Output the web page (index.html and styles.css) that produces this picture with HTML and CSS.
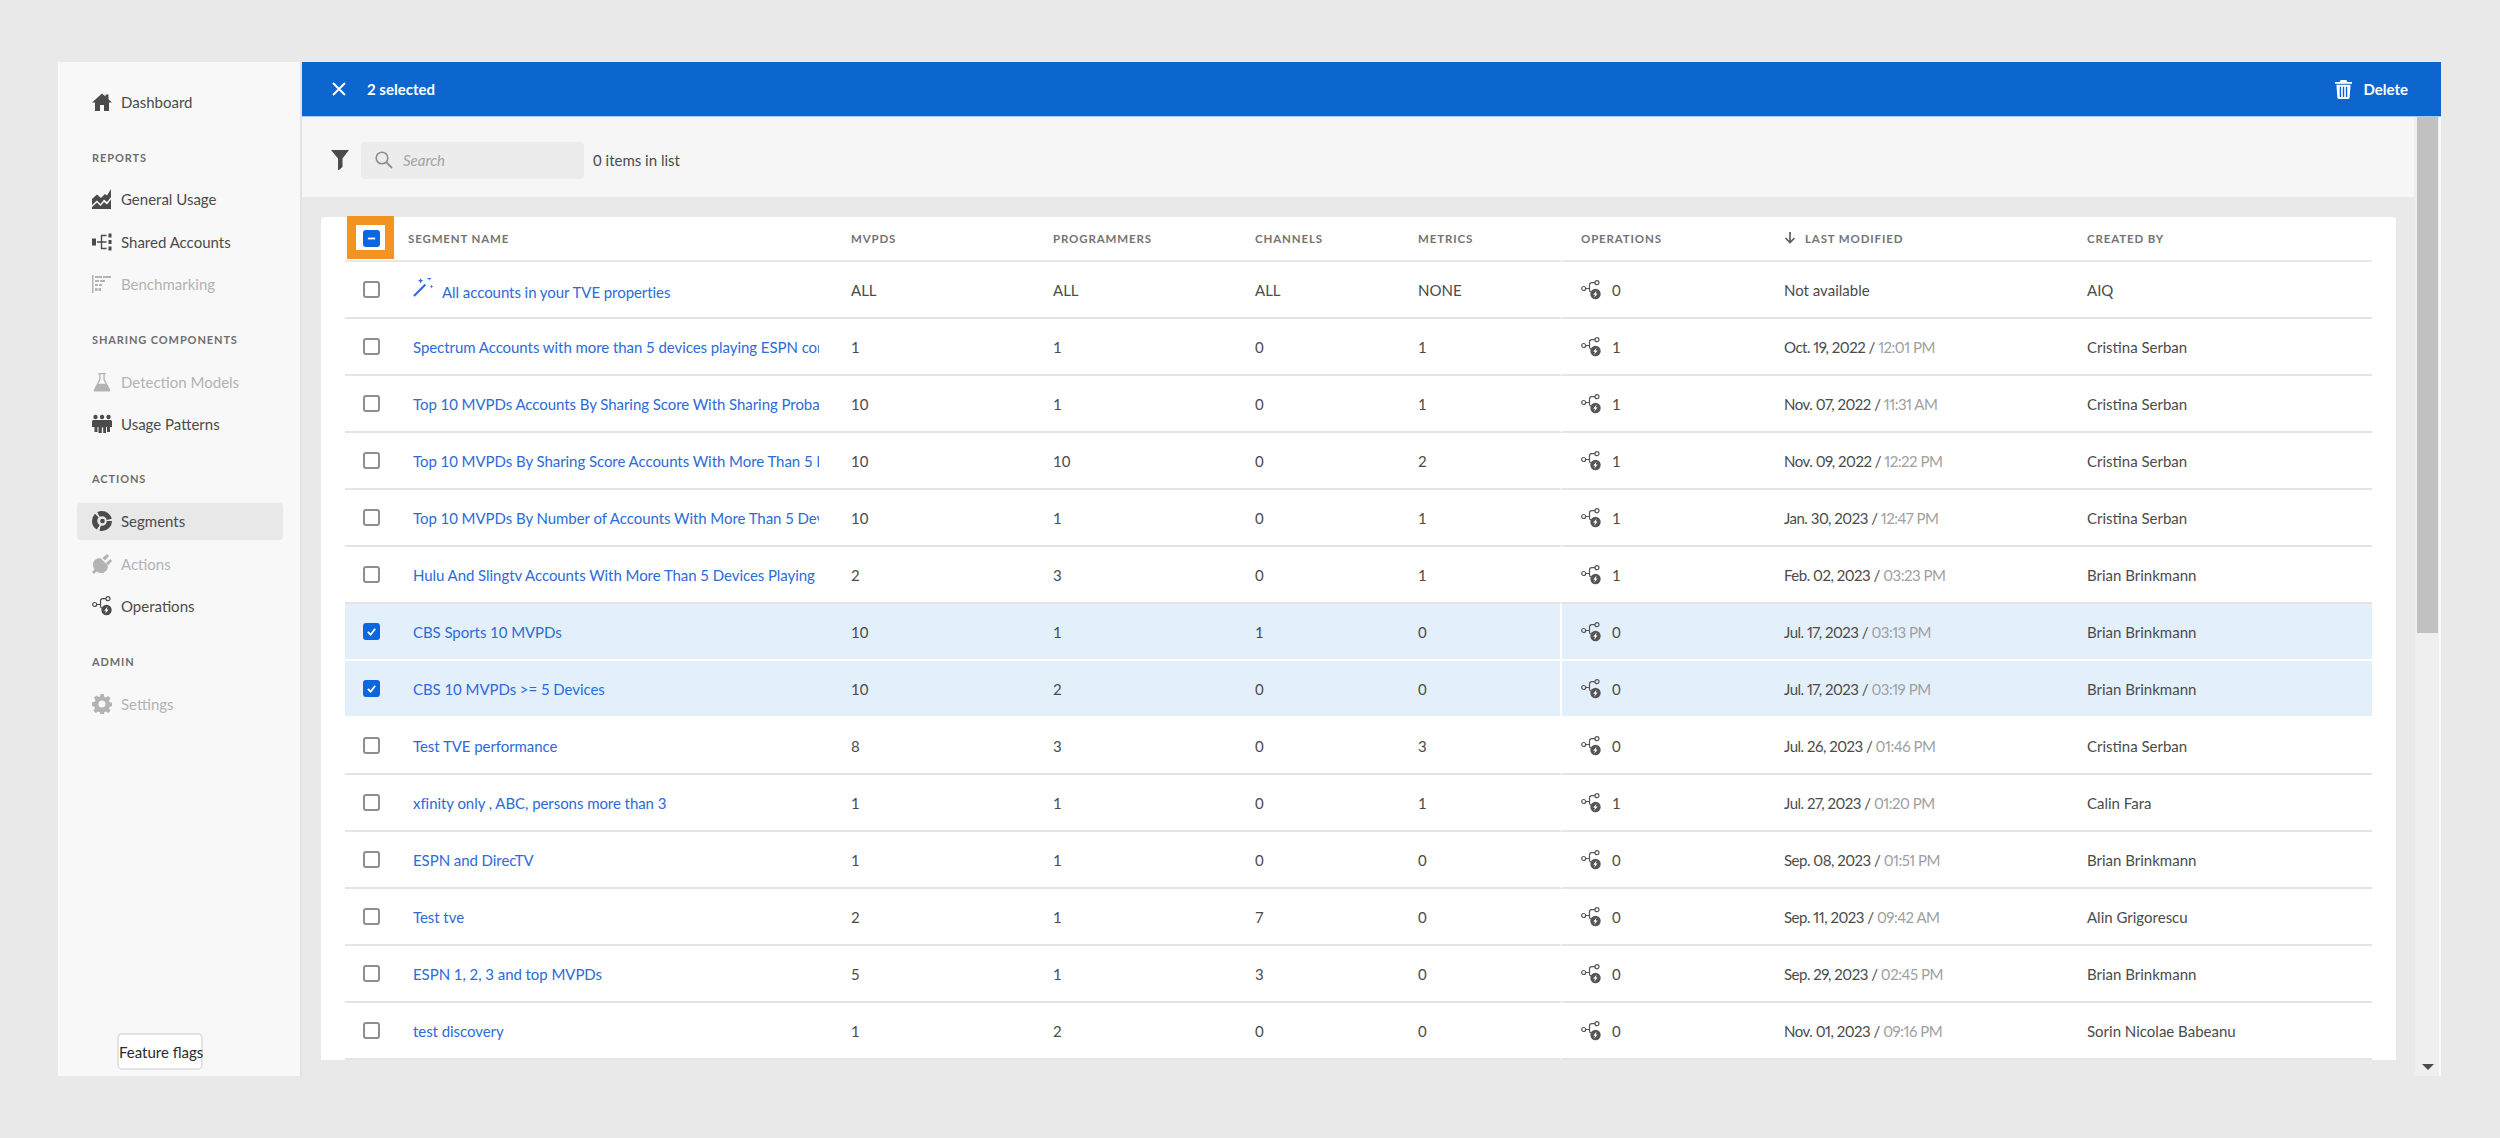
FILE: index.html
```html
<!DOCTYPE html>
<html lang="en">
<head>
    <meta charset="UTF-8">
    <title>Segments</title>
    <link rel="stylesheet" href="styles.css">
</head>
<body>
    <svg class="sprite" xmlns="http://www.w3.org/2000/svg">
        <symbol id="i-home" viewBox="0 0 20 20"><path d="M10 1.500 0 10.500h3V19h5v-6h4v6h5v-8.500h3l-3.500-3.200V2.500h-3v2z"/></symbol>
        <symbol id="i-usage" viewBox="0 0 20 20"><path d="M0 10 5 5.500 9 9l4-4 2 1.500L19 0v8l-4 5-3-2.500L8.500 15 5 11.500 0 16zM0 18l5-4.500 3.500 3.500 3.500-4 3 2.500 4-5V20H0z"/></symbol>
        <symbol id="i-shared" viewBox="0 0 20 20"><path d="M0 6.500h4v7H0zM16.500 1.500h3v4h-3zM16.500 8h3v4h-3zM16.500 14.500h3v4h-3z"/><path d="M5 10h4M14.500 3.500H9.500v13h5M9.500 10h5" fill="none" stroke="currentColor" stroke-width="1.400"/></symbol>
        <symbol id="i-bench" viewBox="0 0 20 20"><path d="M0 1h1.500v18H0zM3 2h7v2H3zM11 2h8v2h-8zM3 6h4v2H3zM8 6h5v2H8zM3 10h3v2H3zM7 10h3v2H7zM3 14h2.500v3H3zM6.500 14H9v3H6.500z"/></symbol>
        <symbol id="i-flask" viewBox="0 0 20 22"><path d="M6 1h8v1.500h-1V8l6 11.500c.5 1-.2 2-1.300 2H2.300C1.200 21.500.500 20.500 1 19.500L7 8V2.500H6zM8.500 2.500V8.500L6 13h8l-2.500-4.500v-6z" fill-rule="evenodd"/></symbol>
        <symbol id="i-group" viewBox="0 0 20 20"><circle cx="3.500" cy="3" r="2.200"/><circle cx="10" cy="3" r="2.200"/><circle cx="16.500" cy="3" r="2.200"/><path d="M0 7.500c0-1 .8-1.500 1.500-1.500h17c.7 0 1.500.5 1.500 1.500V13h-2v5h-3v-5h-1v6h-2.800v-5.500h-1.400V19H6.500v-6h-1v5h-3v-5H0z"/></symbol>
        <symbol id="i-segments" viewBox="0 0 20 20"><circle cx="10" cy="10" r="7.400" fill="none" stroke="currentColor" stroke-width="5.200" stroke-dasharray="13.500 2"/><circle cx="10.500" cy="10" r="2.300"/></symbol>
        <symbol id="i-plug" viewBox="0 0 20 20"><path d="M9 4.500 15.500 11c1 3-.5 6-3.500 7.500-2.500 1-5.500.5-7.500-1L2 20 0 18l2.500-2.500C1 13.500.5 10.500 1.500 8 3 5 6 3.500 9 4.500z"/><path d="M10.500 4 15 0l2 2-4 4.500zM14 9l4.500-4 1.500 2-4 4.500z"/></symbol>
        <symbol id="i-ops" viewBox="0 0 20 20"><g fill="none" stroke="currentColor" stroke-width="1.200"><circle cx="2.700" cy="8.500" r="2"/><circle cx="16" cy="2.700" r="2"/><path d="M4.700 8.500h3.800M8.500 8.500V5a2.300 2.300 0 0 1 2.300-2.300H14M8.500 8.500v1.500a2 2 0 0 0 1.500 2"/></g><circle cx="14.500" cy="14" r="5.200"/><path d="M15.600 10.500 12.200 14.800h1.800l-.8 2.900 3.400-4.300h-1.800z" fill="#fff"/></symbol>
        <symbol id="i-gear" viewBox="0 0 20 20"><path d="M8.300 0h3.400l.5 2.800 1.700.7L16.200 1.900l2.400 2.400-1.600 2.300.7 1.700 2.800.5v3.400l-2.800.5-.7 1.700 1.600 2.300-2.400 2.400-2.300-1.600-1.700.7-.5 2.800H8.300l-.5-2.800-1.700-.7-2.300 1.600-2.400-2.400 1.600-2.300-.7-1.700L0 11.700V8.300l2.800-.5.7-1.700-1.600-2.300 2.400-2.400 2.300 1.600 1.700-.7zM10 6.500a3.500 3.500 0 1 0 0 7 3.500 3.500 0 0 0 0-7z" fill-rule="evenodd"/></symbol>
        <symbol id="i-wand" viewBox="0 0 22 22"><path d="M1 21 13 9" fill="none" stroke="currentColor" stroke-width="2.200"/><path d="M8 2l.8 2.200L11 5l-2.200.8L8 8l-.8-2.200L5 5l2.200-.8zM17 0l.7 1.800 1.800.7-1.800.7L17 5l-.7-1.800-1.800-.7 1.800-.7zM19.500 9l.5 1.500 1.500.5-1.500.5-.5 1.500-.5-1.500-1.500-.5 1.500-.5z"/></symbol>
    </svg>

    <div class="app">
        <nav class="sidebar">
            <a class="nav-item"><svg class="nav-icon"><use href="#i-home"/></svg>Dashboard</a>

            <div class="nav-head">Reports</div>
            <a class="nav-item"><svg class="nav-icon"><use href="#i-usage"/></svg>General Usage</a>
            <a class="nav-item"><svg class="nav-icon"><use href="#i-shared"/></svg>Shared Accounts</a>
            <a class="nav-item off"><svg class="nav-icon"><use href="#i-bench"/></svg>Benchmarking</a>

            <div class="nav-head">Sharing Components</div>
            <a class="nav-item off"><svg class="nav-icon"><use href="#i-flask"/></svg>Detection Models</a>
            <a class="nav-item"><svg class="nav-icon"><use href="#i-group"/></svg>Usage Patterns</a>

            <div class="nav-head">Actions</div>
            <a class="nav-item active"><svg class="nav-icon"><use href="#i-segments"/></svg>Segments</a>
            <a class="nav-item off"><svg class="nav-icon"><use href="#i-plug"/></svg>Actions</a>
            <a class="nav-item"><svg class="nav-icon"><use href="#i-ops"/></svg>Operations</a>

            <div class="nav-head">Admin</div>
            <a class="nav-item off"><svg class="nav-icon"><use href="#i-gear"/></svg>Settings</a>

            <button class="flags">Feature flags</button>
        </nav>

        <main class="main">
            <div class="select-bar">
                <div class="select-left">
                    <svg class="close" viewBox="0 0 14 14"><path d="M1 1l12 12M13 1 1 13" stroke="#fff" stroke-width="2" fill="none"/></svg>
                    <span>2 selected</span>
                </div>
                <div class="select-right">
                    <svg class="trash" viewBox="0 0 18 20"><path d="M6 0h6l1 2h5v2H0V2h5zM1.500 5h15l-1 13.500c0 .8-.7 1.500-1.500 1.500H4c-.8 0-1.500-.7-1.500-1.500zM5 7v11h1.500V7zM8.250 7v11h1.500V7zM11.500 7v11H13V7z" fill="#fff" fill-rule="evenodd"/></svg>
                    <span>Delete</span>
                </div>
            </div>

            <div class="below">
                <div class="content">
                    <div class="toolbar">
                        <svg class="filter" viewBox="0 0 18 20"><path d="M0 0h18l-6.500 8.500V17L8 20H7V8.500z" fill="#4b4b4b"/></svg>
                        <div class="search">
                            <svg class="glass" viewBox="0 0 18 18"><circle cx="7" cy="7" r="5.800" fill="none" stroke="#8e8e8e" stroke-width="1.600"/><path d="M11.500 11.500 17 17" stroke="#8e8e8e" stroke-width="1.800"/></svg>
                            <span>Search</span>
                        </div>
                        <span class="count">0 items in list</span>
                    </div>

                    <div class="card">
                        <div class="marker"></div>
                        <table class="grid">
                            <colgroup>
                                <col class="c-check"><col class="c-name"><col class="c-mvpd"><col class="c-prog">
                                <col class="c-chan"><col class="c-metric"><col class="c-ops"><col class="c-date"><col class="c-user">
                            </colgroup>
                            <thead>
                                <tr>
                                    <th class="check"><span class="cb on"><svg viewBox="0 0 12 12"><path d="M2 6h8" stroke="#fff" stroke-width="2"/></svg></span></th>
                                    <th>Segment Name</th><th>MVPDs</th><th>Programmers</th><th>Channels</th><th class="metric">Metrics</th>
                                    <th class="ops">Operations</th>
                                    <th><svg class="sort" viewBox="0 0 12 12"><path d="M6 0v10M1.500 6 6 10.500 10.500 6" fill="none" stroke="#5e5e5e" stroke-width="1.700"/></svg>Last Modified</th>
                                    <th>Created By</th>
                                </tr>
                            </thead>
                            <tbody>
                                <tr>
                                    <td class="check"><span class="cb"></span></td>
                                    <td><div class="name first"><svg class="wand"><use href="#i-wand"/></svg><a>All accounts in your TVE properties</a></div></td>
                                    <td>ALL</td><td>ALL</td><td>ALL</td><td class="metric">NONE</td>
                                    <td class="ops"><svg class="op-icon"><use href="#i-ops"/></svg>0</td>
                                    <td>Not available</td><td>AIQ</td>
                                </tr>
                                <tr>
                                    <td class="check"><span class="cb"></span></td>
                                    <td><div class="name"><a>Spectrum Accounts with more than 5 devices playing ESPN content</a></div></td>
                                    <td>1</td><td>1</td><td>0</td><td class="metric">1</td>
                                    <td class="ops"><svg class="op-icon"><use href="#i-ops"/></svg>1</td>
                                    <td class="date">Oct. 19, 2022 / <span class="time">12:01 PM</span></td><td>Cristina Serban</td>
                                </tr>
                                <tr>
                                    <td class="check"><span class="cb"></span></td>
                                    <td><div class="name"><a>Top 10 MVPDs Accounts By Sharing Score With Sharing Probability</a></div></td>
                                    <td>10</td><td>1</td><td>0</td><td class="metric">1</td>
                                    <td class="ops"><svg class="op-icon"><use href="#i-ops"/></svg>1</td>
                                    <td class="date">Nov. 07, 2022 / <span class="time">11:31 AM</span></td><td>Cristina Serban</td>
                                </tr>
                                <tr>
                                    <td class="check"><span class="cb"></span></td>
                                    <td><div class="name"><a>Top 10 MVPDs By Sharing Score Accounts With More Than 5 Devices</a></div></td>
                                    <td>10</td><td>10</td><td>0</td><td class="metric">2</td>
                                    <td class="ops"><svg class="op-icon"><use href="#i-ops"/></svg>1</td>
                                    <td class="date">Nov. 09, 2022 / <span class="time">12:22 PM</span></td><td>Cristina Serban</td>
                                </tr>
                                <tr>
                                    <td class="check"><span class="cb"></span></td>
                                    <td><div class="name"><a>Top 10 MVPDs By Number of Accounts With More Than 5 Devices</a></div></td>
                                    <td>10</td><td>1</td><td>0</td><td class="metric">1</td>
                                    <td class="ops"><svg class="op-icon"><use href="#i-ops"/></svg>1</td>
                                    <td class="date">Jan. 30, 2023 / <span class="time">12:47 PM</span></td><td>Cristina Serban</td>
                                </tr>
                                <tr>
                                    <td class="check"><span class="cb"></span></td>
                                    <td><div class="name"><a>Hulu And Slingtv Accounts With More Than 5 Devices Playing</a></div></td>
                                    <td>2</td><td>3</td><td>0</td><td class="metric">1</td>
                                    <td class="ops"><svg class="op-icon"><use href="#i-ops"/></svg>1</td>
                                    <td class="date">Feb. 02, 2023 / <span class="time">03:23 PM</span></td><td>Brian Brinkmann</td>
                                </tr>
                                <tr class="picked">
                                    <td class="check"><span class="cb on"><svg viewBox="0 0 12 12"><path d="M2 6.500 5 9.500 10 3" fill="none" stroke="#fff" stroke-width="2"/></svg></span></td>
                                    <td><div class="name"><a>CBS Sports 10 MVPDs</a></div></td>
                                    <td>10</td><td>1</td><td>1</td><td class="metric">0</td>
                                    <td class="ops"><svg class="op-icon"><use href="#i-ops"/></svg>0</td>
                                    <td class="date">Jul. 17, 2023 / <span class="time">03:13 PM</span></td><td>Brian Brinkmann</td>
                                </tr>
                                <tr class="picked">
                                    <td class="check"><span class="cb on"><svg viewBox="0 0 12 12"><path d="M2 6.500 5 9.500 10 3" fill="none" stroke="#fff" stroke-width="2"/></svg></span></td>
                                    <td><div class="name"><a>CBS 10 MVPDs &gt;= 5 Devices</a></div></td>
                                    <td>10</td><td>2</td><td>0</td><td class="metric">0</td>
                                    <td class="ops"><svg class="op-icon"><use href="#i-ops"/></svg>0</td>
                                    <td class="date">Jul. 17, 2023 / <span class="time">03:19 PM</span></td><td>Brian Brinkmann</td>
                                </tr>
                                <tr>
                                    <td class="check"><span class="cb"></span></td>
                                    <td><div class="name"><a>Test TVE performance</a></div></td>
                                    <td>8</td><td>3</td><td>0</td><td class="metric">3</td>
                                    <td class="ops"><svg class="op-icon"><use href="#i-ops"/></svg>0</td>
                                    <td class="date">Jul. 26, 2023 / <span class="time">01:46 PM</span></td><td>Cristina Serban</td>
                                </tr>
                                <tr>
                                    <td class="check"><span class="cb"></span></td>
                                    <td><div class="name"><a>xfinity only , ABC, persons more than 3</a></div></td>
                                    <td>1</td><td>1</td><td>0</td><td class="metric">1</td>
                                    <td class="ops"><svg class="op-icon"><use href="#i-ops"/></svg>1</td>
                                    <td class="date">Jul. 27, 2023 / <span class="time">01:20 PM</span></td><td>Calin Fara</td>
                                </tr>
                                <tr>
                                    <td class="check"><span class="cb"></span></td>
                                    <td><div class="name"><a>ESPN and DirecTV</a></div></td>
                                    <td>1</td><td>1</td><td>0</td><td class="metric">0</td>
                                    <td class="ops"><svg class="op-icon"><use href="#i-ops"/></svg>0</td>
                                    <td class="date">Sep. 08, 2023 / <span class="time">01:51 PM</span></td><td>Brian Brinkmann</td>
                                </tr>
                                <tr>
                                    <td class="check"><span class="cb"></span></td>
                                    <td><div class="name"><a>Test tve</a></div></td>
                                    <td>2</td><td>1</td><td>7</td><td class="metric">0</td>
                                    <td class="ops"><svg class="op-icon"><use href="#i-ops"/></svg>0</td>
                                    <td class="date">Sep. 11, 2023 / <span class="time">09:42 AM</span></td><td>Alin Grigorescu</td>
                                </tr>
                                <tr>
                                    <td class="check"><span class="cb"></span></td>
                                    <td><div class="name"><a>ESPN 1, 2, 3 and top MVPDs</a></div></td>
                                    <td>5</td><td>1</td><td>3</td><td class="metric">0</td>
                                    <td class="ops"><svg class="op-icon"><use href="#i-ops"/></svg>0</td>
                                    <td class="date">Sep. 29, 2023 / <span class="time">02:45 PM</span></td><td>Brian Brinkmann</td>
                                </tr>
                                <tr>
                                    <td class="check"><span class="cb"></span></td>
                                    <td><div class="name"><a>test discovery</a></div></td>
                                    <td>1</td><td>2</td><td>0</td><td class="metric">0</td>
                                    <td class="ops"><svg class="op-icon"><use href="#i-ops"/></svg>0</td>
                                    <td class="date">Nov. 01, 2023 / <span class="time">09:16 PM</span></td><td>Sorin Nicolae Babeanu</td>
                                </tr>
                            </tbody>
                        </table>
                    </div>
                </div>

                <div class="scrollbar">
                    <div class="thumb"></div>
                    <div class="arrow"></div>
                </div>
            </div>
        </main>
    </div>
</body>
</html>
```

FILE: styles.css
```css
body {
    margin: 0;
    height: 1138px;
    overflow: hidden;
    background-color: #e9e9e9;
    font-family: Lato, "Open Sans", sans-serif;
    font-size: 15px;
    color: #4b4b4b;
}
.sprite {
    display: none;
}
.app {
    display: flex;
    width: 2383px;
    height: 1014px;
    margin: 62px 0 0 58px;
}

/* left nav */
.sidebar {
    display: flex;
    flex-direction: column;
    flex: none;
    box-sizing: border-box;
    width: 244px;
    padding: 19px 0 6px 1px;
    background-color: #f8f8f8;
    border-left: 1px solid #fbfbfb;
    border-right: 2px solid #e3e3e3;
}
.nav-item {
    display: flex;
    align-items: center;
    gap: 9px;
    box-sizing: border-box;
    width: 206px;
    height: 37px;
    margin: 2.75px 0 2.75px 17px;
    padding-left: 15px;
    border-radius: 4px;
    color: #4b4b4b;
}
.nav-item.off {
    color: #b3b3b3;
}
.nav-item.active {
    background-color: #e8e8e8;
}
.nav-icon {
    flex: none;
    width: 20px;
    height: 20px;
    fill: currentColor;
}
.nav-head {
    box-sizing: border-box;
    height: 54.7px;
    padding: 26px 0 0 32px;
    font-size: 11px;
    line-height: 16px;
    font-weight: 700;
    letter-spacing: 0.9px;
    text-transform: uppercase;
    color: #6e6e6e;
}
.flags {
    width: 86px;
    height: 37px;
    margin: auto 0 0 57px;
    padding: 0;
    background-color: #fff;
    border: 2px solid #e3e3e3;
    border-radius: 5px;
    font-family: Lato, sans-serif;
    font-size: 15px;
    color: #2c2c2c;
    white-space: nowrap;
}

/* blue selection bar */
.main {
    display: flex;
    flex-direction: column;
    flex: 1;
    min-width: 0;
}
.select-bar {
    display: flex;
    align-items: center;
    justify-content: space-between;
    flex: none;
    height: 55px;
    padding: 0 33px 0 30px;
    background-color: #0d66d0;
    border-bottom: 1px solid #a9c8ef;
    box-sizing: border-box;
    color: #fff;
    font-weight: 700;
    font-size: 15px;
}
.select-left, .select-right {
    display: flex;
    align-items: center;
}
.select-left {
    gap: 21px;
}
.select-right {
    gap: 11px;
}
.close {
    width: 14px;
    height: 14px;
}
.trash {
    width: 17px;
    height: 19px;
}

/* everything under the bar */
.below {
    display: flex;
    flex: 1;
    min-height: 0;
}
.content {
    flex: 1;
    min-width: 0;
    overflow: hidden;
}
.toolbar {
    display: flex;
    align-items: center;
    box-sizing: border-box;
    height: 80px;
    padding: 6px 0 0 29px;
    background-color: #f6f6f6;
    border-right: 1px solid #ececec;
}
.filter {
    width: 18px;
    height: 20px;
    margin-right: 12px;
}
.search {
    display: flex;
    align-items: center;
    gap: 10px;
    box-sizing: border-box;
    width: 223px;
    height: 37px;
    margin-right: 9px;
    padding-left: 14px;
    background-color: #ececec;
    border-radius: 4px;
    color: #a3a3a3;
    font-style: italic;
}
.glass {
    width: 18px;
    height: 18px;
}
.count {
    font-size: 15px;
}
.card {
    position: relative;
    margin: 20px 19px 0;
    padding: 0 24px;
    background-color: #fff;
    border-radius: 4px 4px 0 0;
}
.marker {
    position: absolute;
    left: 26px;
    top: -1px;
    box-sizing: border-box;
    width: 47px;
    height: 43px;
    border: 9px solid #f39422;
}

/* table */
.grid {
    width: 2027px;
    table-layout: fixed;
    border-collapse: separate;
    border-spacing: 0;
}
.c-check { width: 63px; }
.c-name { width: 443px; }
.c-mvpd { width: 202px; }
.c-prog { width: 202px; }
.c-chan { width: 163px; }
.c-metric { width: 144px; }
.c-ops { width: 222px; }
.c-date { width: 303px; }
.c-user { width: 285px; }
.grid th {
    box-sizing: border-box;
    height: 45px;
    padding: 0;
    text-align: left;
    font-size: 11.5px;
    font-weight: 700;
    letter-spacing: 0.85px;
    text-transform: uppercase;
    color: #747474;
    border-bottom: 2px solid #e8e8e8;
}
.grid td {
    box-sizing: border-box;
    height: 57px;
    padding: 0;
    white-space: nowrap;
    border-bottom: 2px solid #e4e4e4;
}
.grid .check {
    padding-left: 18px;
}
.grid .ops {
    padding-left: 19px;
}
.metric {
    border-right: 2px solid transparent;
}
.picked td {
    background-color: #e4effc;
    border-bottom-color: #fff;
}
.picked .metric {
    border-right-color: #fff;
}
.cb {
    display: block;
    box-sizing: border-box;
    width: 17px;
    height: 17px;
    background-color: #fff;
    border: 2px solid #8e8e8e;
    border-radius: 3px;
}
.cb.on {
    position: relative;
    padding: 1px;
    background-color: #0b67dd;
    border-color: #0b67dd;
}
.cb svg {
    display: block;
    width: 11px;
    height: 11px;
}
.name {
    display: flex;
    align-items: center;
    width: 406px;
    margin-left: 5px;
    overflow: hidden;
    letter-spacing: -0.06px;
}
.name a {
    color: #2d6bd8;
}
.name.first a {
    padding-top: 5px;
}
.wand {
    flex: none;
    width: 21px;
    height: 21px;
    margin: -6px 8px 0 0;
    fill: #2d6bd8;
    color: #2d6bd8;
}
.op-icon {
    width: 20px;
    height: 20px;
    margin-right: 11px;
    vertical-align: -4px;
    fill: currentColor;
    color: #555;
}
.date {
    font-variant-numeric: proportional-nums;
    letter-spacing: -0.5px;
}
.time {
    color: #a0a0a0;
}
.sort {
    width: 12px;
    height: 12px;
    margin-right: 9px;
    vertical-align: -1px;
}

/* scrollbar strip */
.scrollbar {
    display: flex;
    flex-direction: column;
    flex: none;
    box-sizing: border-box;
    width: 26px;
    padding-left: 2px;
    background-color: #efefef;
    border-right: 2px solid #fbfbfb;
}
.thumb {
    width: 21px;
    height: 516px;
    background-color: #c1c1c1;
}
.arrow {
    width: 0;
    height: 0;
    margin: auto 0 6px 5px;
    border-left: 6px solid transparent;
    border-right: 6px solid transparent;
    border-top: 6px solid #4b4b4b;
}
```
